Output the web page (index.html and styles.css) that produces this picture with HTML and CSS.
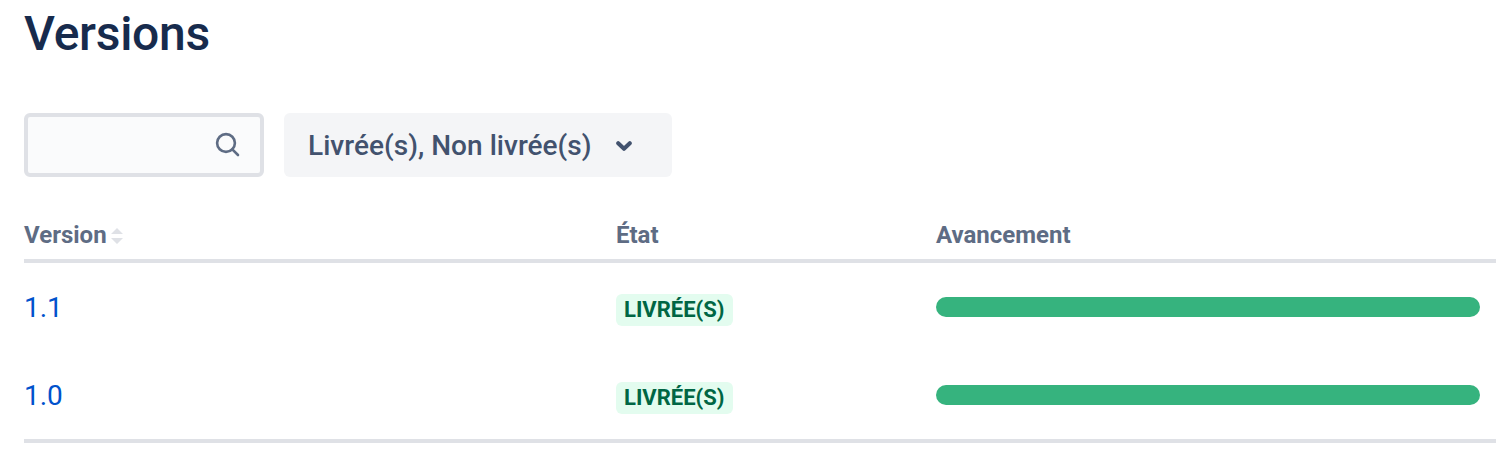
FILE: index.html
```html
<!DOCTYPE html>
<html lang="fr">
<head>
<meta charset="utf-8">
<title>Versions</title>
<link rel="stylesheet" href="styles.css">
</head>
<body>
<main class="page">
  <h1 class="title">Versions</h1>
  <div class="filters">
    <label class="search">
      <input class="search-input" type="text" aria-label="Rechercher">
      <svg class="search-icon" width="26" height="26" viewBox="0 0 26 26" fill="none" stroke="#5e6c84" stroke-width="2.6"><circle cx="11" cy="11" r="8.9"/><path d="M17.3 17.3L23 23" stroke-linecap="round"/></svg>
    </label>
    <button class="status-filter" type="button">
      <span>Livrée(s), Non livrée(s)</span>
      <svg class="chevron" width="16" height="10" viewBox="0 0 16 10" fill="none" stroke="#42526e" stroke-width="4" stroke-linecap="round" stroke-linejoin="round"><path d="M2.2 2.2L8 7.8L13.8 2.2"/></svg>
    </button>
  </div>
  <div class="table">
    <div class="row head">
      <div class="sortable">Version<svg class="sort" width="12" height="16" viewBox="0 0 12 16" fill="#dfe1e6"><path d="M0 6L6 0L12 6ZM0 10H12L6 16Z"/></svg></div>
      <div>État</div>
      <div>Avancement</div>
    </div>
    <div class="row item">
      <a class="link">1.1</a>
      <div class="state"><span class="badge">Livrée(s)</span></div>
      <div class="progress"></div>
    </div>
    <div class="row item">
      <a class="link">1.0</a>
      <div class="state"><span class="badge">Livrée(s)</span></div>
      <div class="progress"></div>
    </div>
  </div>
</main>
</body>
</html>
```
FILE: styles.css
```css
* { box-sizing: border-box; }
body { margin: 0; background: #fff; font-family: Roboto, sans-serif; overflow: hidden; }
.page { padding: 6px 0 0 24px; }
.title { margin: 0; font-size: 48px; line-height: 56px; font-weight: 500; color: #172b4d; letter-spacing: -0.3px; }
.filters { display: flex; gap: 20px; margin-top: 51px; height: 64px; }
.search { display: flex; align-items: center; width: 240px; padding-right: 19px; border: 4px solid #dfe1e6; border-radius: 6px; background: #fafbfc; }
.search-input { flex: 1; min-width: 0; border: 0; outline: 0; background: transparent; }
.search-icon { flex: none; }
.status-filter { display: flex; align-items: center; gap: 24px; width: 388px; padding: 2px 24px 0; border: 0; border-radius: 6px; background: #f4f5f7; color: #42526e; font: 500 28px/62px Roboto, sans-serif; letter-spacing: 0.03px; }
.table { margin-top: 38px; border-bottom: 4px solid #dfe1e6; }
.row { display: grid; grid-template-columns: 592px 320px 544px; }
.head { height: 48px; border-bottom: 4px solid #dfe1e6; font-size: 24px; line-height: 40px; font-weight: 700; color: #5e6c84; }
.sortable { display: flex; align-items: center; gap: 4px; height: 40px; }
.sort { margin-top: 2px; }
.item { height: 88px; align-items: center; }
.link { padding-top: 2px; font-size: 28px; line-height: 40px; color: #0052cc; }
.state { display: flex; padding-top: 6px; }
.badge { padding: 0 8px; border-radius: 6px; background: #e3fcef; color: #006644; font-size: 22px; line-height: 32px; font-weight: 700; text-transform: uppercase; }
.progress { height: 20px; border-radius: 10px; background: #36b37e; }
```
